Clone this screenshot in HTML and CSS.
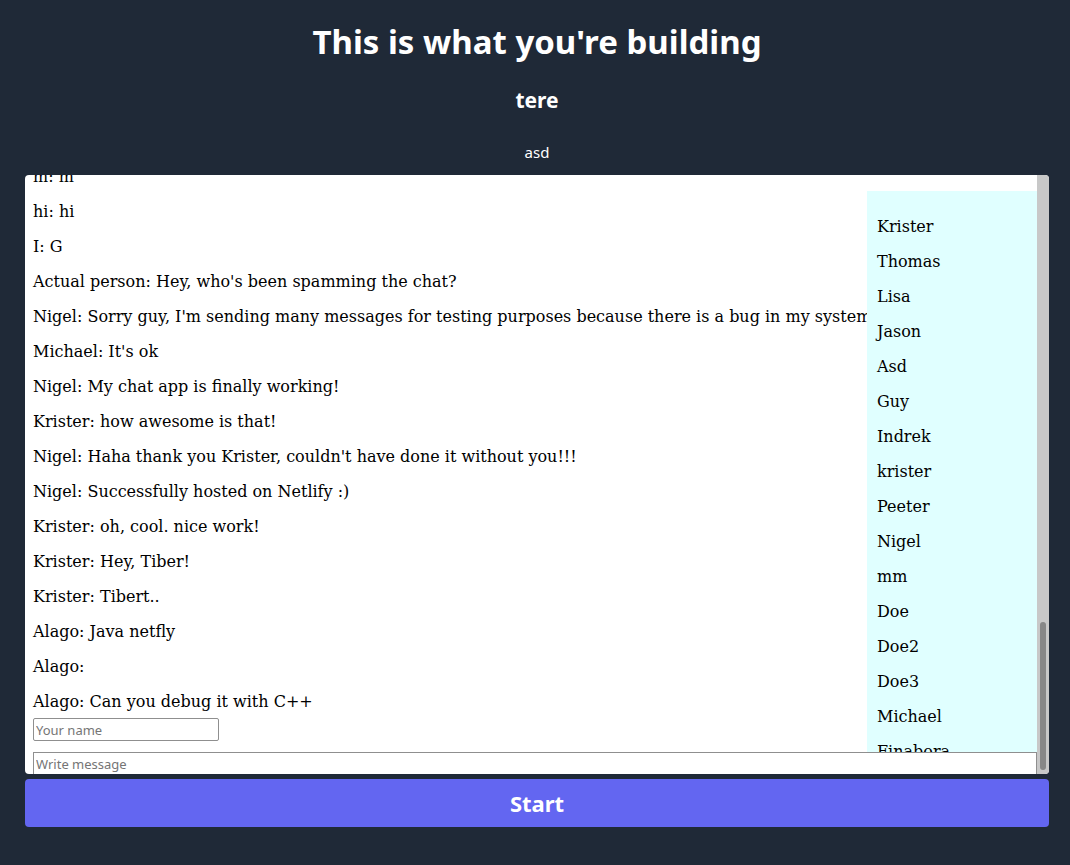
FILE: index.html
```html
<!DOCTYPE html>
<html lang="en">
<head>
<meta charset="utf-8">
<title>Chat</title>
<link rel="stylesheet" href="styles.css">
</head>
<body>
<div class="page">
  <h1 class="title">This is what you're building</h1>
  <h2 class="room">tere</h2>
  <p class="sub">asd</p>
  <div class="chat">
    <div class="chat-main">
      <div class="messages">
        <div class="msg-list">
          <p>m: m</p>
          <p>hi: hi</p>
          <p>I: G</p>
          <p>Actual person: Hey, who's been spamming the chat?</p>
          <p>Nigel: Sorry guy, I'm sending many messages for testing purposes because there is a bug in my system.</p>
          <p>Michael: It's ok</p>
          <p>Nigel: My chat app is finally working!</p>
          <p>Krister: how awesome is that!</p>
          <p>Nigel: Haha thank you Krister, couldn't have done it without you!!!</p>
          <p>Nigel: Successfully hosted on Netlify :)</p>
          <p>Krister: oh, cool. nice work!</p>
          <p>Krister: Hey, Tiber!</p>
          <p>Krister: Tibert..</p>
          <p>Alago: Java netfly</p>
          <p>Alago:</p>
          <p>Alago: Can you debug it with C++</p>
        </div>
        <input class="name-input" type="text" placeholder="Your name">
      </div>
      <div class="users">
        <p>Krister</p>
        <p>Thomas</p>
        <p>Lisa</p>
        <p>Jason</p>
        <p>Asd</p>
        <p>Guy</p>
        <p>Indrek</p>
        <p>krister</p>
        <p>Peeter</p>
        <p>Nigel</p>
        <p>mm</p>
        <p>Doe</p>
        <p>Doe2</p>
        <p>Doe3</p>
        <p>Michael</p>
        <p>Finabora</p>
        <p>Alago</p>
      </div>
      <div class="compose">
        <input class="msg-input" type="text" placeholder="Write message">
      </div>
    </div>
    <div class="scrollbar"><div class="thumb"></div></div>
  </div>
  <button class="start" type="button">Start</button>
</div>
</body>
</html>
```
FILE: styles.css
```css
* { box-sizing: border-box; }
html, body { margin: 0; padding: 0; }
body {
  background: #1f2937;
  font-family: "Noto Sans", "Open Sans", sans-serif;
  color: #ffffff;
}
.page {
  padding: 22px 21px 0 25px;
  display: flex;
  flex-direction: column;
}
.title {
  margin: 0;
  text-align: center;
  font-size: 33px;
  line-height: 40px;
  font-weight: 700;
}
.room {
  margin: 24px 0 0;
  text-align: center;
  font-size: 21px;
  line-height: 28px;
  font-weight: 700;
}
.sub {
  margin: 26px 0 0;
  text-align: center;
  font-size: 15px;
  line-height: 24px;
}
.chat {
  margin-top: 11px;
  height: 599px;
  background: #ffffff;
  border-radius: 4px;
  overflow: hidden;
  display: grid;
  grid-template-columns: 1fr 12px;
  color: #000000;
  font-family: "DejaVu Serif", serif;
  font-size: 16px;
}
.chat-main {
  display: grid;
  grid-template-columns: 1fr 170px;
  grid-template-rows: 1fr 22px;
  min-height: 0;
  overflow: hidden;
}
.messages {
  min-height: 0;
  min-width: 0;
  overflow: hidden;
  display: flex;
  flex-direction: column;
  justify-content: flex-end;
  padding: 0 0 11px 8px;
}
.msg-list {
  display: flex;
  flex-direction: column;
  gap: 16px;
}
.msg-list p {
  margin: 0;
  line-height: 19px;
  white-space: nowrap;
}
.name-input {
  margin-top: 7px;
  width: 186px;
  height: 23px;
}
.name-input, .msg-input {
  flex: none;
  border: 1px solid #8f8f8f;
  border-radius: 2px;
  padding: 1px 2px;
  font-family: "Noto Sans", sans-serif;
  font-size: 13px;
  color: #000;
  background: #fff;
}
.name-input::placeholder, .msg-input::placeholder { color: #757575; }
.users {
  margin-top: 16px;
  min-height: 0;
  overflow: hidden;
  background: #e0ffff;
  padding: 26px 10px 0;
  display: flex;
  flex-direction: column;
  gap: 16px;
}
.users p {
  margin: 0;
  line-height: 19px;
  flex: none;
}
.compose {
  grid-column: 1 / 3;
  padding-left: 8px;
  overflow: hidden;
}
.msg-input {
  display: block;
  width: 100%;
  height: 24px;
  border-radius: 0;
}
.scrollbar {
  background: #c8c8c8;
  display: flex;
  flex-direction: column;
  justify-content: flex-end;
  padding: 0 3px 4px 3px;
}
.thumb {
  height: 148px;
  background: #878787;
  border-radius: 3px;
}
.start {
  margin-top: 5px;
  height: 48px;
  border: none;
  border-radius: 4px;
  background: #6366f1;
  color: #ffffff;
  font-family: "Noto Sans", sans-serif;
  font-size: 22px;
  font-weight: 700;
  cursor: pointer;
}
```
